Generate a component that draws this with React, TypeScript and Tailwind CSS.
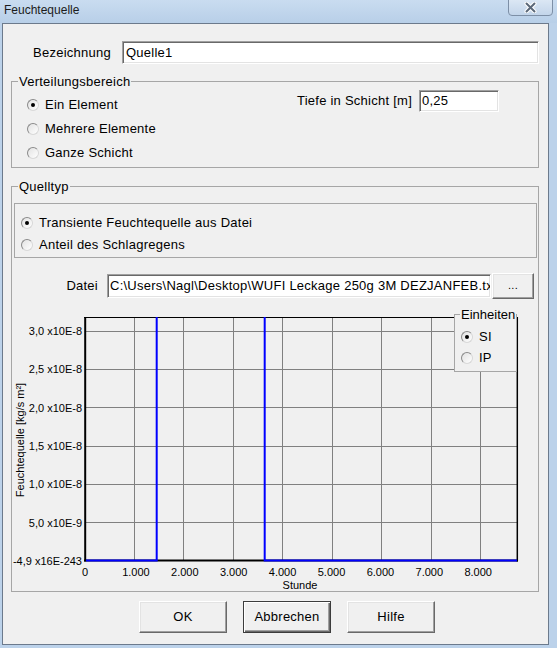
import React from "react";

// Windows-style dialog "Feuchtequelle" with a moisture source chart

const sunken =
  "bg-white border border-t-[#a0a0a0] border-l-[#a0a0a0] border-r-white border-b-white shadow-[inset_1px_1px_0_#696969,inset_-1px_-1px_0_#e3e3e3]";

const raised =
  "bg-[#f0f0f0] border border-t-white border-l-white border-r-[#696969] border-b-[#696969] shadow-[inset_-1px_-1px_0_#a0a0a0,inset_1px_1px_0_#e3e3e3]";

const Radio: React.FC<{ checked?: boolean }> = ({ checked }) => (
  <span className="flex h-[12px] w-[12px] shrink-0 items-center justify-center rounded-full border border-t-[#8a8a8a] border-l-[#8a8a8a] border-r-[#d8d8d8] border-b-[#d8d8d8] bg-linear-to-br from-[#e2e2e2] to-white">
    {checked && <span className="h-[4px] w-[4px] rounded-full bg-black" />}
  </span>
);

const RadioRow: React.FC<{ label: string; checked?: boolean; h: string }> = ({
  label,
  checked,
  h,
}) => (
  <div className={`flex items-center gap-[6px] ${h}`}>
    <Radio checked={checked} />
    <span>{label}</span>
  </div>
);

// chart coordinates are relative to the svg (page x-12, y-300)
const gridX = [122.5, 171.5, 221.5, 270.5, 320.5, 369.5, 419.5, 468.5];
const gridY = [31.5, 69.5, 107.5, 146.5, 184.5, 222.5];
const yLabels: [string, number][] = [
  ["3,0 x10E-8", 31],
  ["2,5 x10E-8", 69.3],
  ["2,0 x10E-8", 107.7],
  ["1,5 x10E-8", 146],
  ["1,0 x10E-8", 184.3],
  ["5,0 x10E-9", 222.7],
  ["-4,9 x16E-243", 260.7],
];
const xLabels = ["0", "1.000", "2.000", "3.000", "4.000", "5.000", "6.000", "7.000", "8.000"];

const Chart: React.FC = () => (
  <svg width={526} height={291} className="block tracking-normal">
    {gridX.map((x) => (
      <line key={x} x1={x} x2={x} y1={17} y2={260} stroke="#808080" strokeWidth={1} />
    ))}
    {gridY.map((y) => (
      <line key={y} x1={73} x2={505} y1={y} y2={y} stroke="#808080" strokeWidth={1} />
    ))}
    {/* axes */}
    <line x1={72} x2={506} y1={17.5} y2={17.5} stroke="#000" strokeWidth={1} />
    <line x1={73.2} x2={73.2} y1={17} y2={261.5} stroke="#000" strokeWidth={2} />
    <line x1={505.3} x2={505.3} y1={17} y2={261.5} stroke="#000" strokeWidth={1.5} />
    <line x1={72} x2={506} y1={260.5} y2={260.5} stroke="#000" strokeWidth={2} />
    {/* data */}
    <polyline
      points="74,260.5 144.7,260.5 144.7,17"
      fill="none"
      stroke="#0000ff"
      strokeWidth={2}
    />
    <polyline
      points="252.7,17 252.7,260.5 505,260.5"
      fill="none"
      stroke="#0000ff"
      strokeWidth={2}
    />
    {yLabels.map(([t, y]) => (
      <text key={t} x={70} y={y + 4} textAnchor="end" fontSize={11} fill="#000">
        {t}
      </text>
    ))}
    {xLabels.map((t, k) => (
      <text
        key={t}
        x={k === 0 ? 73 : 75 + 48.9 * k}
        y={275.5}
        textAnchor="middle"
        fontSize={11}
        fill="#000"
      >
        {t}
      </text>
    ))}
    <text x={288} y={289} textAnchor="middle" fontSize={11} fill="#000">
      Stunde
    </text>
    <text
      x={0}
      y={0}
      textAnchor="middle"
      fontSize={11}
      fill="#000"
      transform="translate(12 140) rotate(-90)"
    >
      Feuchtequelle [kg/s m²]
    </text>
  </svg>
);

export default function App() {
  return (
    <div className="flex h-[648px] w-[557px] flex-col bg-[#bcd2ea] font-['Liberation_Sans',Arial,sans-serif] text-[13px] tracking-[0.25px] text-black">
      {/* title bar */}
      <div className="flex h-[23px] items-start bg-linear-to-b from-[#c9dcf0] to-[#b8cfe8]">
        <span className="ml-[4px] mt-[3px] text-[12px] leading-[14px] tracking-normal text-[#1b1b1b]">
          Feuchtequelle
        </span>
        <div className="ml-auto mr-[4px] mt-[-1px] flex h-[17px] w-[45px] items-center justify-center rounded-b-[4px] border border-[#7d8fa6] bg-linear-to-b from-[#dbe7f4] to-[#c3d5ea]">
          <svg width={13} height={11} viewBox="0 0 13 11">
            <path d="M2.5 1.5 L10.5 9.5 M10.5 1.5 L2.5 9.5" stroke="#fff" strokeWidth={4} strokeLinecap="round" />
            <path d="M2.5 1.5 L10.5 9.5 M10.5 1.5 L2.5 9.5" stroke="#5b6878" strokeWidth={2} strokeLinecap="round" />
          </svg>
        </div>
      </div>

      <div className="flex h-[622px]">
        <div className="w-[2px]" />
        {/* client area */}
        <div className="flex w-[547px] flex-col border border-[#6c7a8c] bg-[#f0f0f0] pl-[8px] pr-[9px]">
          {/* Bezeichnung */}
          <div className="mt-[17px] flex h-[23px] items-center">
            <span className="w-[100px] text-right">Bezeichnung</span>
            <div className={`ml-[11px] flex h-[23px] flex-1 items-center pl-[3px] ${sunken}`}>
              Quelle1
            </div>
          </div>

          {/* Verteilungsbereich */}
          <fieldset className="mt-[10px] border border-[#a6a6a6] pb-[2px]">
            <legend className="ml-[6px] px-[1px] leading-[15px]">Verteilungsbereich</legend>
            <div className="flex">
              <div className="flex flex-col pl-[15px] pt-[4px]">
                <RadioRow label="Ein Element" checked h="h-[24px]" />
                <RadioRow label="Mehrere Elemente" h="h-[24px]" />
                <RadioRow label="Ganze Schicht" h="h-[24px]" />
              </div>
              <div className="ml-auto mr-[39px] mt-[1px] flex h-[22px] items-center self-start">
                <span>Tiefe in Schicht [m]</span>
                <div className={`ml-[7px] flex h-[22px] w-[80px] items-center pl-[2px] ${sunken}`}>
                  0,25
                </div>
              </div>
            </div>
          </fieldset>

          {/* Quelltyp */}
          <fieldset className="mt-[11px] border border-[#a6a6a6]">
            <legend className="ml-[6px] px-[1px] leading-[15px]">Quelltyp</legend>
            <div className="ml-[2px] mr-[1px] mt-[9px] flex flex-col border border-[#a6a6a6] pb-[1px] pl-[6px] pt-[8px]">
              <RadioRow label="Transiente Feuchtequelle aus Datei" checked h="h-[22px]" />
              <RadioRow label="Anteil des Schlagregens" h="h-[22px]" />
            </div>

            <div className="mt-[15px] flex h-[26px] items-center">
              <span className="w-[86px] text-right">Datei</span>
              <div
                className={`ml-[9px] flex h-[24px] w-[384px] items-center overflow-hidden whitespace-nowrap pl-[2px] ${sunken}`}
              >
                C:\Users\Nagl\Desktop\WUFI Leckage 250g 3M DEZJANFEB.txt
              </div>
              <button
                type="button"
                className={`ml-[1px] flex h-[26px] w-[42px] items-center justify-center pb-[2px] text-[11px] ${raised}`}
              >
                ...
              </button>
            </div>

            <div className="relative mt-[1px] h-[291px] w-[526px]">
              <Chart />
              <fieldset className="absolute left-[442px] top-[7px] w-[63px] border border-[#a6a6a6] bg-[#f0f0f0] pb-[3px] pl-[6px]">
                <legend className="ml-[-1px] px-[1px] leading-[15px] tracking-normal">Einheiten</legend>
                <div className="flex flex-col pt-[4px]">
                  <RadioRow label="SI" checked h="h-[21px]" />
                  <RadioRow label="IP" h="h-[21px]" />
                </div>
              </fieldset>
            </div>
          </fieldset>

          {/* buttons */}
          <div className="mt-[9px] flex gap-[16px] pl-[128px]">
            <button type="button" className={`h-[32px] w-[88px] ${raised}`}>
              OK
            </button>
            <button
              type="button"
              className="h-[32px] w-[88px] border border-[#3c3c3c] bg-[#f0f0f0] shadow-[inset_1px_1px_0_#fff,inset_-1px_-1px_0_#696969,inset_-2px_-2px_0_#a0a0a0]"
            >
              Abbrechen
            </button>
            <button type="button" className={`h-[32px] w-[88px] ${raised}`}>
              Hilfe
            </button>
          </div>
        </div>
      </div>
    </div>
  );
}
